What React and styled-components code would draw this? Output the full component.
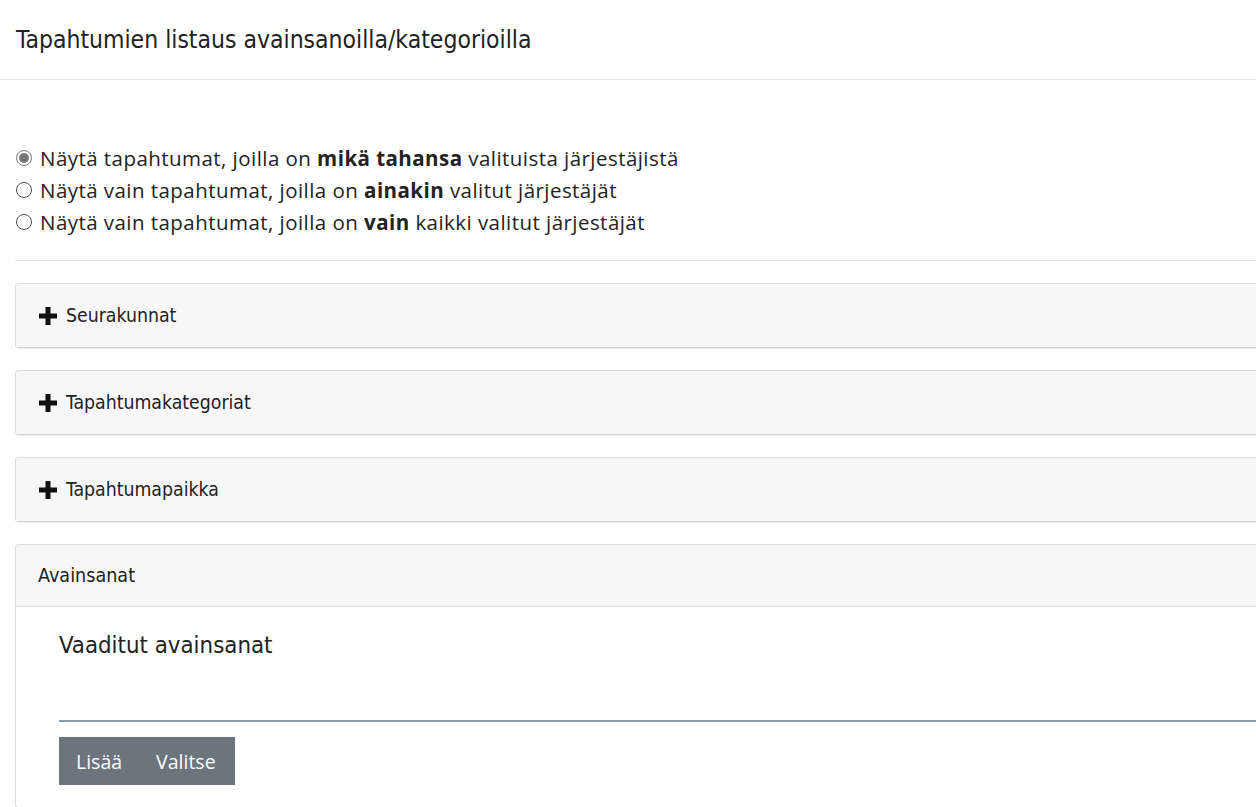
import React from 'react';
import styled, { createGlobalStyle } from 'styled-components';

const GlobalStyle = createGlobalStyle`
  html, body {
    margin: 0;
    padding: 0;
    background: #fff;
    overflow: hidden;
  }
  body {
    font-family: "Open Sans", "Liberation Sans", sans-serif;
    color: #212529;
  }
`;

const Page = styled.div`
  width: 1300px;
`;

const Header = styled.header`
  height: 79px;
  border-bottom: 1px solid #e6e6e6;
  display: flex;
  align-items: center;
  padding-left: 16px;
`;

const Title = styled.h1`
  margin: 0;
  font-family: "DejaVu Sans Condensed", "Liberation Sans", sans-serif;
  font-weight: 400;
  font-size: 24.5px;
  color: #222;
`;

const Content = styled.main`
  padding: 62px 0 0 15px;
`;

const RadioGroup = styled.div`
  display: flex;
  flex-direction: column;
`;

const RadioRow = styled.label`
  display: flex;
  align-items: center;
  height: 32px;
  font-size: 20.5px;
  letter-spacing: 0.45px;
  color: #222;
  white-space: pre;
  & b {
    font-weight: 700;
  }
`;

const RadioDot = styled.span`
  flex: none;
  width: 16px;
  height: 16px;
  box-sizing: border-box;
  border-radius: 50%;
  border: 1px solid ${(p) => (p.checked ? '#767676' : '#4f4f4f')};
  margin: 0 8px 0 1px;
  display: flex;
  align-items: center;
  justify-content: center;
  &::after {
    content: '';
    display: ${(p) => (p.checked ? 'block' : 'none')};
    width: 10px;
    height: 10px;
    border-radius: 50%;
    background: #767676;
  }
`;

const Rule = styled.hr`
  margin: 22px 0 22px;
  border: 0;
  border-top: 1px solid #e3e3e3;
`;

const Panel = styled.section`
  background: ${(p) => (p.open ? '#fff' : '#f7f7f7')};
  border: 1px solid #dcdcdc;
  border-bottom-color: #d2d2d2;
  border-radius: 4px;
  box-shadow: 0 1px 1px rgba(0, 0, 0, 0.08);
  margin-bottom: 22px;
`;

const PanelHeader = styled.div`
  height: ${(p) => (p.open ? '61px' : '63px')};
  display: flex;
  align-items: center;
  padding-left: 22px;
  background: #f7f7f7;
  border-bottom: ${(p) => (p.open ? '1px solid #dcdcdc' : 'none')};
  border-radius: 4px 4px 0 0;
  font-family: "DejaVu Sans Condensed", "Liberation Sans", sans-serif;
  font-size: ${(p) => (p.open ? '19.6px' : '19.3px')};
  color: #222;
  gap: 8px;
`;

const PlusIcon = () => (
  <svg width="20" height="20" viewBox="0 0 20 20" aria-hidden="true">
    <path d="M7.5 1h5v6.5H19v5h-6.5V19h-5v-6.5H1v-5h6.5z" fill="#111" />
  </svg>
);

const PanelBody = styled.div`
  padding: 20px 0 22px 43px;
`;

const FieldLabel = styled.div`
  font-family: "DejaVu Sans Condensed", "Liberation Sans", sans-serif;
  font-size: 23.8px;
  color: #222;
  line-height: 36px;
`;

const Underline = styled.div`
  margin-top: 57px;
  height: 2px;
  background: #8b9dad;
`;

const ButtonGroup = styled.div`
  display: inline-flex;
  margin-top: 15px;
  background: #6c757d;
`;

const Button = styled.button`
  height: 48px;
  border: 0;
  background: transparent;
  color: #fff;
  font-family: "Open Sans", sans-serif;
  font-size: 19.5px;
  font-weight: 500;
  padding: 0 ${(p) => p.pr || 17}px 0 17px;
`;

const radios = [
  { pre: 'Näytä tapahtumat, joilla on ', bold: 'mikä tahansa', post: ' valituista järjestäjistä', checked: true },
  { pre: 'Näytä vain tapahtumat, joilla on ', bold: 'ainakin', post: ' valitut järjestäjät' },
  { pre: 'Näytä vain tapahtumat, joilla on ', bold: 'vain', post: ' kaikki valitut järjestäjät' },
];

const App = () => (
  <Page>
    <GlobalStyle />
    <Header>
      <Title>Tapahtumien listaus avainsanoilla/kategorioilla</Title>
    </Header>
    <Content>
      <RadioGroup>
        {radios.map((r) => (
          <RadioRow key={r.bold}>
            <RadioDot checked={r.checked} />
            {r.pre}
            <b>{r.bold}</b>
            {r.post}
          </RadioRow>
        ))}
      </RadioGroup>
      <Rule />
      {['Seurakunnat', 'Tapahtumakategoriat', 'Tapahtumapaikka'].map((t) => (
        <Panel key={t}>
          <PanelHeader>
            <PlusIcon />
            {t}
          </PanelHeader>
        </Panel>
      ))}
      <Panel open>
        <PanelHeader open>Avainsanat</PanelHeader>
        <PanelBody>
          <FieldLabel>Vaaditut avainsanat</FieldLabel>
          <Underline />
          <ButtonGroup>
            <Button>Lisää</Button>
            <Button pr={19}>Valitse</Button>
          </ButtonGroup>
        </PanelBody>
      </Panel>
    </Content>
  </Page>
);

export default App;
